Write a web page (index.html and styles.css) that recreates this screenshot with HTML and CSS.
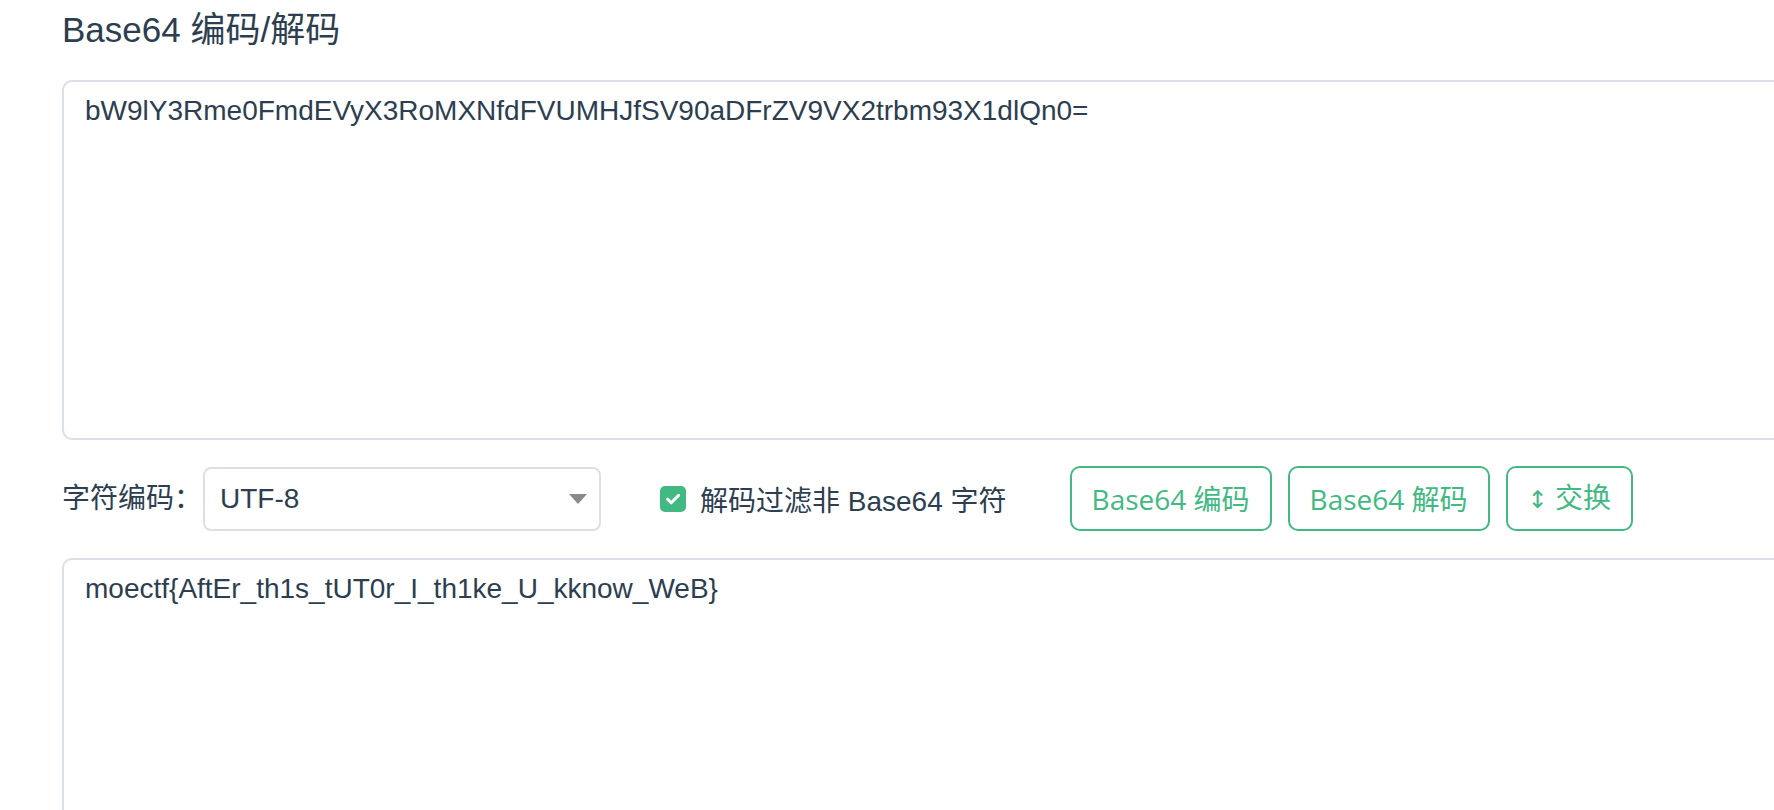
FILE: index.html
```html
<!DOCTYPE html>
<html lang="zh-CN">
<head>
<meta charset="utf-8">
<title>Base64 编码/解码</title>
<link rel="stylesheet" href="styles.css">
</head>
<body>
<main class="tool">
  <h2 class="title">Base64 编码/解码</h2>
  <div class="box box-input">bW9lY3Rme0FmdEVyX3RoMXNfdFVUMHJfSV90aDFrZV9VX2trbm93X1dlQn0=</div>
  <div class="controls">
    <span class="field-label">字符编码：</span>
    <div class="select">
      <span class="select-value">UTF-8</span>
      <span class="caret"></span>
    </div>
    <label class="check">
      <svg class="check-box" viewBox="0 0 26 26" width="26" height="26" aria-hidden="true">
        <rect x="0" y="0" width="26" height="26" rx="5" fill="#42b983"/>
        <path d="M7.5 13.2 L11.3 16.8 L18.6 9.4" fill="none" stroke="#fff" stroke-width="3" stroke-linecap="round" stroke-linejoin="round"/>
      </svg>
      <span class="check-text">解码过滤非 Base64 字符</span>
    </label>
    <div class="actions">
      <button class="btn" type="button">Base64 编码</button>
      <button class="btn" type="button">Base64 解码</button>
      <button class="btn btn-swap" type="button"><span class="arrow">↕</span> 交换</button>
    </div>
  </div>
  <div class="box box-output">moectf{AftEr_th1s_tUT0r_I_th1ke_U_kknow_WeB}</div>
</main>
</body>
</html>
```

FILE: styles.css
```css
html, body {
  margin: 0;
  padding: 0;
  background: #ffffff;
  overflow: hidden;
}

body {
  font-family: "Liberation Sans", Arial, "Noto Sans CJK SC", sans-serif;
  color: #2c3e50;
}

.tool {
  width: 1740px;
  height: 810px;
  overflow: hidden;
  padding-left: 62px;
}

.title {
  margin: 0;
  height: 80px;
  box-sizing: border-box;
  padding-top: 10px;
  font-size: 35px;
  line-height: 40px;
  font-weight: 400;
  color: #2c3e50;
}

.box {
  box-sizing: border-box;
  border: 2px solid #dcdfe6;
  border-radius: 10px;
  padding: 8px 21px;
  font-size: 28px;
  line-height: 42px;
  color: #2c3e50;
  background: #fff;
}

.box-input {
  height: 360px;
  margin-bottom: 26px;
}

.box-output {
  height: 320px;
}

.controls {
  display: flex;
  align-items: center;
  height: 65px;
  margin-bottom: 27px;
}

.field-label {
  font-size: 28px;
  line-height: 40px;
  margin-right: 1px;
}

.select {
  box-sizing: border-box;
  width: 398px;
  height: 64px;
  border: 2px solid #dcdfe6;
  border-radius: 8px;
  display: flex;
  align-items: center;
  justify-content: space-between;
  padding: 0 12px 0 15px;
  font-size: 28px;
  background: #fff;
}

.caret {
  width: 0;
  height: 0;
  border-left: 9px solid transparent;
  border-right: 9px solid transparent;
  border-top: 10px solid #8a8a8a;
}

.check {
  display: flex;
  align-items: center;
  gap: 14px;
  margin-left: 59px;
  font-size: 28px;
}

.check-box {
  display: block;
}

.actions {
  display: flex;
  gap: 16px;
  margin-left: 63px;
}

.btn {
  height: 65px;
  box-sizing: border-box;
  padding: 0 20px;
  border: 2px solid #42b983;
  border-radius: 10px;
  background: #fff;
  color: #42b983;
  font-family: "Open Sans", "Noto Sans CJK SC", sans-serif;
  font-size: 28px;
  line-height: 40px;
}

.arrow {
  font-family: "DejaVu Sans", sans-serif;
  font-size: 24px;
}
```
